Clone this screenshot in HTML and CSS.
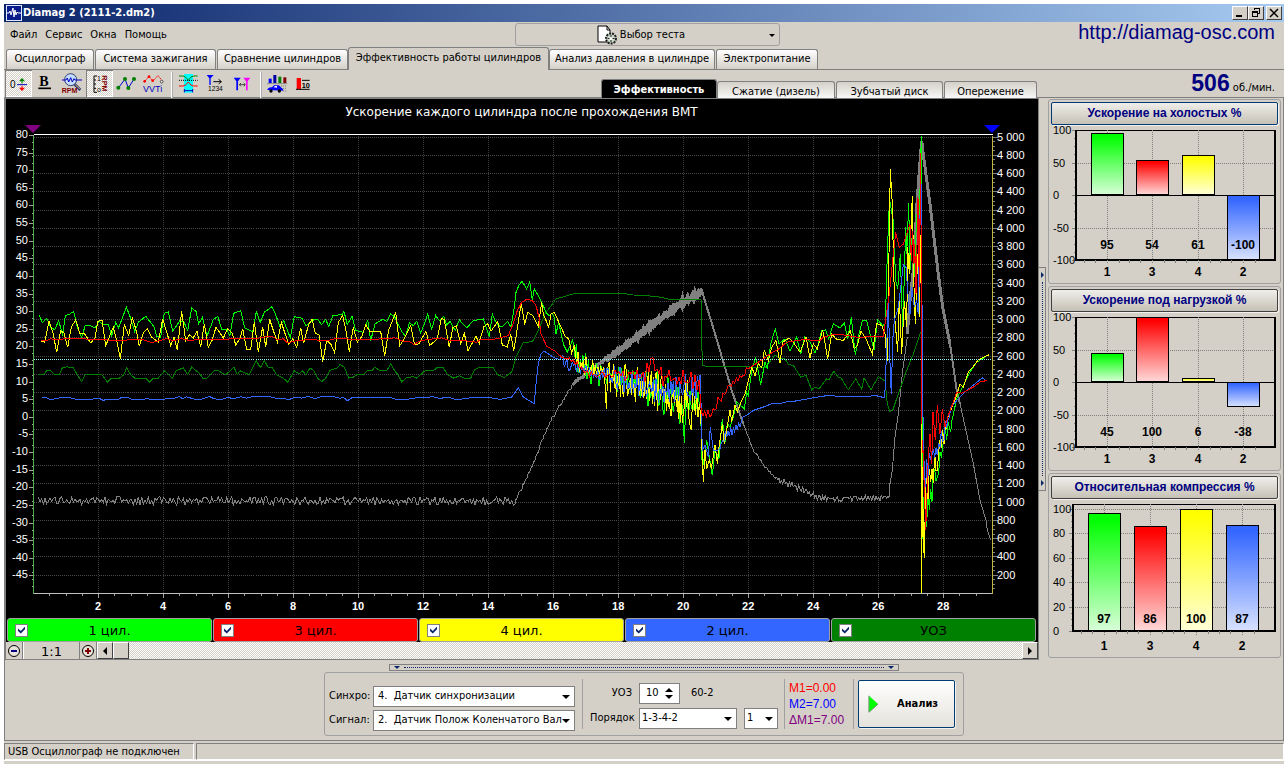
FILE: index.html
```html
<!DOCTYPE html>
<html lang="ru">
<head>
<meta charset="utf-8">
<title>Diamag 2 (2111-2.dm2)</title>
<link rel="stylesheet" href="styles.css">
</head>
<body>
<div class="app">
  <header class="titlebar">
    <svg class="app-icon" viewBox="0 0 16 16"><rect width="16" height="16" fill="#dfe8ff"/><rect x="1" y="1" width="14" height="14" fill="#0a1c8c"/><path d="M1 8h2l1-2 1 4 2-7 1 9 1-7 1 5 1-3 1 1h3" fill="none" stroke="#fff"/></svg>
    <h1>Diamag 2 (2111-2.dm2)</h1>
    <div class="win-buttons">
      <button aria-label="Свернуть"><svg viewBox="0 0 14 12"><path d="M3 8h6v2H3z"/></svg></button>
      <button aria-label="Восстановить"><svg viewBox="0 0 14 12"><path d="M5 1h6v1H5zM10 1h1v6h-1zM5 1h1v2H5zM9 6h2v1H9zM3 4h6v2H3zM3 4h1v6H3zM8 4h1v6H8zM3 9h6v1H3z"/></svg></button>
      <button class="close" aria-label="Закрыть"><svg viewBox="0 0 14 12"><path d="M3 2l8 8M11 2l-8 8" fill="none" stroke="#000" stroke-width="1.500"/></svg></button>
    </div>
  </header>

  <div class="menubar">
    <nav class="menu"><button>Файл</button><button>Сервис</button><button>Окна</button><button>Помощь</button></nav>
    <button class="test-select">
      <svg viewBox="0 0 20 20"><path d="M1 1h9l3 4v12H1z" fill="#fff" stroke="#000"/><path d="M10 1v4h3" fill="none" stroke="#000"/><circle cx="14" cy="13.500" r="5" fill="#b8c8b8" stroke="#222" stroke-width="2" stroke-dasharray="2 1"/><circle cx="14" cy="13.500" r="3.500" fill="#cfdccf"/><path d="M14 10v7M10.500 13.500h7" stroke="#222"/><circle cx="14" cy="13.500" r="1.500" fill="#fff"/></svg>
      <span>Выбор теста</span><i class="arrow"></i>
    </button>
    <a class="site" href="http://diamag-osc.com">http://diamag-osc.com</a>
  </div>

  <div class="tabs" role="tablist">
    <button class="tab t-osc" role="tab">Осциллограф</button>
    <button class="tab t-ign" role="tab">Система зажигания</button>
    <button class="tab t-cmp" role="tab">Сравнение цилиндров</button>
    <button class="tab t-eff active" role="tab" aria-selected="true">Эффективность работы цилиндров</button>
    <button class="tab t-prs" role="tab">Анализ давления в цилиндре</button>
    <button class="tab t-pow" role="tab">Электропитание</button>
  </div>

  <div class="toolbar">
    <div class="tools">
      <button class="tool pressed" aria-label="Ноль"><svg viewBox="0 0 81 81"><text x="15" y="54" font-size="30">0</text><path d="M36 44h30" stroke="#0000c0" stroke-width="3"/><path d="M51 28v13" stroke="#008000" stroke-width="3"/><path d="M42 34l9-10 9 10z" fill="#008000"/><path d="M51 47v10" stroke="red" stroke-width="3"/><path d="M42 53l9 10 9-10z" fill="red"/></svg></button>
      <button class="tool" aria-label="Жирная линия"><svg viewBox="0 0 81 81"><text class="serif" x="22" y="48" font-size="42">B</text><path d="M19 55h38" stroke="#000" stroke-width="5"/></svg></button>
      <button class="tool" aria-label="Обороты"><svg viewBox="0 0 81 81"><path d="M46 42l18 18" stroke="#203070" stroke-width="8"/><path d="M48 43l15 15" stroke="#e0c060" stroke-width="3"/><circle cx="35" cy="29" r="18" fill="#c4dcff" stroke="#304070" stroke-width="3"/><path d="M9 30h12l4-6 4 12 6-13 5 13 5-10 3 4h21" fill="none" stroke="#0000c0" stroke-width="3"/><text class="maroon" x="8" y="69" font-size="21">RPM</text></svg></button>
      <button class="tool pressed" aria-label="Шкала"><svg viewBox="0 0 81 81"><path d="M33 18H24V67h9M24 30h6M24 42h6M24 55h6" fill="none" stroke="#000" stroke-width="3"/><text x="33" y="32" font-size="21">1</text><text x="33" y="67" font-size="21">o</text><text class="maroon" font-size="22" transform="translate(47 16) rotate(90)">RPM</text></svg></button>
      <button class="tool" aria-label="Точки"><svg viewBox="0 0 81 81"><path d="M17 53L36 27l10 27L63 27" fill="none" stroke="#0000d0" stroke-width="3"/><g fill="#008000"><circle cx="16" cy="53" r="6"/><circle cx="36" cy="27" r="6"/><circle cx="46" cy="54" r="6"/><circle cx="63" cy="27" r="6"/></g></svg></button>
      <button class="tool" aria-label="VVTi"><svg viewBox="0 0 81 81"><path d="M14 34L27 19l11 14L54 17l12 14" fill="none" stroke="red" stroke-width="3" stroke-dasharray="5 2"/><g fill="red"><circle cx="14" cy="34" r="4"/><circle cx="27" cy="20" r="4"/><circle cx="38" cy="32" r="4"/></g><circle cx="65" cy="35" r="4" fill="#fff" stroke="#000" stroke-width="2"/><text class="navy" x="9" y="66" font-size="27">VVTi</text></svg></button>
      <span class="tool-sep"></span>
      <button class="tool" aria-label="Сравнение"><svg viewBox="0 0 81 81"><path d="M27 12h27v56H27z" fill="#00ffff"/><path d="M12 18h12q8 0 16 13q8-13 16-13h12" fill="none" stroke="#008000" stroke-width="3"/><path d="M12 31h56" stroke="#000" stroke-width="3" stroke-dasharray="3 3"/><path d="M12 48h12q8 0 16-12q8 12 16 12h12" fill="none" stroke="red" stroke-width="3"/><path d="M28 62h25M28 57v10M53 57v10" stroke="#0000c0" stroke-width="3"/></svg></button>
      <button class="tool" aria-label="Нумерация"><svg viewBox="0 0 81 81"><path d="M14 15h21l-9 10v20h-4V25z" fill="#0000ff"/><path d="M34 35h24M50 28l8 7-8 7" fill="none" stroke="#000" stroke-width="3"/><text x="18" y="62" font-size="20">1234</text></svg></button>
      <button class="tool" aria-label="Маркеры"><svg viewBox="0 0 81 81"><path d="M14 23h21l-8 11v27h-5V34z" fill="#0000ff"/><path d="M43 23h21l-8 11v27h-5V34z" fill="#ff00ff"/><path d="M32 44h16M36 39l-5 5 5 5M44 39l5 5-5 5" fill="none" stroke="#000" stroke-width="2"/></svg></button>
      <span class="tool-sep"></span>
      <button class="tool" aria-label="Автомобиль"><svg viewBox="0 0 81 81"><path d="M14 26h9v13h-9z" fill="#0000ff"/><path d="M28 15h9v24h-9z" fill="#0000a0"/><path d="M43 20h9v19h-9z" fill="#008000"/><path d="M58 22h9v17h-9z" fill="#800000"/><path d="M9 41h61" stroke="#888" stroke-width="3"/><path d="M10 60q2-9 14-8l6-6h15l8 8q6 2 5 8z" fill="#0000ff"/><path d="M29 52l4-4h6v5z" fill="#fff"/><circle cx="21" cy="63" r="5"/><circle cx="46" cy="63" r="5"/><path d="M51 48h18M57 55h12M58 63h10" stroke="#777" stroke-width="3" stroke-dasharray="3 3"/></svg></button>
      <button class="tool" aria-label="Уровень"><svg viewBox="0 0 81 81"><path d="M17 24h13v33H17z" fill="#f00"/><path d="M33 31h23M15 58h41" stroke="#000" stroke-width="3"/><text class="boldtxt" x="32" y="54" font-size="22">10</text></svg></button>
    </div>
    <div class="subtabs" role="tablist">
      <button class="subtab s-eff active" role="tab" aria-selected="true">Эффективность</button>
      <button class="subtab s-cmp" role="tab">Сжатие (дизель)</button>
      <button class="subtab s-gear" role="tab">Зубчатый диск</button>
      <button class="subtab s-adv" role="tab">Опережение</button>
    </div>
    <p class="rpm"><b>506</b> об./мин.</p>
  </div>

  <main class="work">
    <section class="scope">
      <svg id="scope" class="scope-plot" role="img" aria-label="Ускорение каждого цилиндра"></svg>
      <div class="legend">
        <label class="ch c1"><input type="checkbox" checked><span>1 цил.</span></label>
        <label class="ch c3"><input type="checkbox" checked><span>3 цил.</span></label>
        <label class="ch c4"><input type="checkbox" checked><span>4 цил.</span></label>
        <label class="ch c2"><input type="checkbox" checked><span>2 цил.</span></label>
        <label class="ch c5"><input type="checkbox" checked><span>УОЗ</span></label>
      </div>
      <div class="scrollrow">
        <button class="zoom-btn" aria-label="Уменьшить"><svg viewBox="0 0 16 16"><circle cx="8" cy="8" r="5.500" fill="#e8e4dc" stroke="#000"/><path d="M5 8h6" stroke="#000080" stroke-width="2"/></svg></button>
        <span class="ratio">1:1</span>
        <button class="zoom-btn" aria-label="Увеличить"><svg viewBox="0 0 16 16"><circle cx="8" cy="8" r="5.500" fill="#e8e4dc" stroke="#000"/><path d="M5 8h6M8 5v6" stroke="#800000" stroke-width="2"/></svg></button>
        <button class="raised" aria-label="Влево"><i class="left"></i></button>
        <button class="raised" aria-label="Ползунок"></button>
        <span class="track"></span>
        <button class="raised" aria-label="Вправо"><i class="right"></i></button>
      </div>
    </section>

    <div class="vsplit"><div class="vgrip"><i class="right"></i><span></span><i class="right"></i></div></div>

    <aside class="side">
      <section class="card"><button class="card-title focus">Ускорение на холостых %</button><svg class="bars" data-min="-100" data-step="50" data-max="100" data-left="26" data-values="95,54,61,-100"></svg></section>
      <section class="card"><button class="card-title">Ускорение под нагрузкой %</button><svg class="bars" data-min="-100" data-step="50" data-max="100" data-left="26" data-values="45,100,6,-38"></svg></section>
      <section class="card"><button class="card-title">Относительная компрессия %</button><svg class="bars" data-min="0" data-step="20" data-max="104" data-left="23" data-values="97,86,100,87"></svg></section>
    </aside>
  </main>

  <section class="bottom">
    <div class="hgrip"><i class="down"></i><span></span><i class="down"></i></div>
    <form class="controls">
      <div class="sensors">
        <label for="sync">Синхро:</label><div class="sel"><select id="sync"><option>4.&nbsp; Датчик синхронизации</option></select><i class="down"></i></div>
        <label for="signal">Сигнал:</label><div class="sel"><select id="signal"><option>2.&nbsp; Датчик Полож Коленчатого Вал</option></select><i class="down"></i></div>
      </div>
      <div class="order">
        <label for="uoz">УОЗ</label>
        <div class="row"><div class="spin"><input id="uoz" type="text" inputmode="numeric" value="10"><div><button type="button" aria-label="Больше"><i class="up"></i></button><button type="button" aria-label="Меньше"><i class="down"></i></button></div></div><span>60-2</span></div>
        <label for="firing">Порядок</label>
        <div class="row"><div class="sel firing"><select id="firing"><option>1-3-4-2</option></select><i class="down"></i></div><div class="sel first"><select aria-label="Первый цилиндр"><option>1</option></select><i class="down"></i></div></div>
      </div>
      <div class="markers"><span class="m1">M1=0.00</span><span class="m2">M2=7.00</span><span class="dm">ΔM1=7.00</span></div>
      <div class="go"><button type="button" class="analyze"><svg viewBox="0 0 12 20"><path d="M1 1l10 9-10 9z" fill="#00ff00"/><path d="M1 1v18l10-9" fill="none" stroke="#6c8c6c"/></svg><span>Анализ</span></button></div>
    </form>
  </section>

  <footer class="status"><span>USB Осциллограф не подключен</span><span></span></footer>
</div>
<script src="charts.js"></script>
</body>
</html>
```
FILE: styles.css
```css
* { box-sizing: border-box; }
body { margin: 0; background: #fff; font: 11px/14px "DejaVu Sans Condensed", "Noto Sans", sans-serif; color: #000; }
button, input, select { font: inherit; color: inherit; padding: 0; margin: 0; border: 0; background: none; border-radius: 0; }
h1, p { margin: 0; }
.app { display: flex; flex-direction: column; height: 100vh; min-height: 700px; padding: 4px 4px 0 4px; background: linear-gradient(#d4d0c8, #d4d0c8) content-box; }

.titlebar { display: flex; align-items: center; height: 18px; flex: none; padding: 0 2px; background: linear-gradient(90deg, #0a246a, #a6caf0); color: #fff; }
.app-icon { width: 16px; height: 16px; margin-right: 1px; }
.titlebar h1 { font: bold 11px/18px "DejaVu Sans Condensed", sans-serif; flex: 1; }
.win-buttons { display: flex; }
.win-buttons button { width: 16px; height: 14px; background: #d4d0c8; border: 1px solid; border-color: #fff #404040 #404040 #fff; }
.win-buttons svg { display: block; width: 14px; height: 12px; }
.win-buttons .close { margin-left: 2px; }

.menubar { display: grid; grid-template-columns: 1fr 265px 1fr; height: 26px; flex: none; align-items: start; padding: 1px 0 0 6px; }
.menu { display: flex; gap: 8px; padding: 5px 0; }
.test-select { display: flex; align-items: center; justify-content: center; gap: 3px; height: 23px; padding-right: 12px; border: 1px solid #a0a0a0; border-radius: 3px; position: relative; }
.test-select svg { width: 20px; height: 20px; }
.arrow { position: absolute; right: 4px; top: 10px; border: 3px solid transparent; border-top-color: #000; border-bottom: 0; }
.site { justify-self: end; padding-right: 9px; margin-top: -3px; font: 20px/24px "Liberation Sans", sans-serif; color: #000080; text-decoration: none; }

.tabs { display: flex; align-items: flex-end; height: 22px; flex: none; padding-left: 2px; border-bottom: 1px solid #808080; gap: 1px; }
.tab { height: 20px; padding-bottom: 1px; border: 1px solid #808080; border-bottom: 0; border-radius: 3px 3px 0 0; background: linear-gradient(#fff, #d4d0c8); white-space: nowrap; }
.tab.active { height: 23px; margin: 0 -1px -1px; background: #d4d0c8; }
.t-osc { width: 88px; } .t-ign { width: 121px; } .t-cmp { width: 131px; } .t-eff { width: 201px; padding-bottom: 3px; } .t-prs { width: 166px; } .t-pow { width: 102px; }

.toolbar { display: grid; grid-template-columns: 597px auto 1fr; height: 28px; flex: none; border-bottom: 1px solid #808080; }
.tools { display: flex; padding-left: 1px; }
.tool { width: 27px; height: 27px; }
.tool svg { display: block; width: 27px; height: 27px; font-family: "Liberation Sans", sans-serif; }
.tool.pressed { background: repeating-conic-gradient(#fff 0 25%, #d4d0c8 0 50%) 0 0 / 2px 2px; box-shadow: inset 1px 1px #808080, inset -1px -1px #fff; }
.tool-sep { width: 4px; border-left: 2px ridge #fff; margin: 2px 0 2px 4px; }
.serif { font-family: "Liberation Serif", serif; font-weight: bold; }
.maroon { fill: #800000; font-weight: bold; } .navy { fill: #0000c0; } .boldtxt { font-weight: bold; }
.subtabs { display: flex; align-items: flex-end; gap: 1px; }
.subtab { height: 20px; border: 1px solid #808080; border-bottom: 0; border-radius: 3px 3px 0 0; background: linear-gradient(#d4d0c8, #fff); }
.subtab.active { height: 22px; padding-bottom: 2px; background: #000; color: #fff; font-weight: bold; margin-right: -1px; }
.s-eff { width: 116px; } .s-cmp { width: 118px; } .s-gear { width: 107px; } .s-adv { width: 93px; }
.rpm { text-align: right; padding-right: 9px; line-height: 27px; white-space: nowrap; }
.rpm b { font: bold 23px/27px "Liberation Sans", sans-serif; color: #000080; }

.work { display: grid; grid-template-columns: minmax(0, 1fr) 9px 235px; flex: 1; min-height: 0; border-right: 1px solid #808080; border-left: 1px solid #808080; }
.scope { display: flex; flex-direction: column; min-width: 0; background: #000; border: 1px solid #808080; }
.scope-plot { display: block; width: 100%; flex: 1; min-height: 0; font-family: "Liberation Sans", sans-serif; font-size: 12px; }
.legend { display: grid; grid-template-columns: repeat(5, 1fr); gap: 1px; height: 24px; padding: 0 2px 2px 1px; font: 13px/20px "DejaVu Sans", sans-serif; }
.ch { display: flex; align-items: center; border: 1px solid #a0a0a0; border-radius: 3px; padding-left: 7px; }
.ch span { flex: 1; text-align: center; padding: 2px 20px 0 0; }
.ch input { appearance: none; width: 13px; height: 13px; background: #fff; border: 1px solid #808080; display: grid; place-items: center; }
.ch input:checked::after { content: ""; width: 7px; height: 7px; background: #0a246a; clip-path: polygon(0 30%, 40% 65%, 100% 0, 100% 40%, 40% 100%, 0 65%); }
.c1 { background: #0f0; } .c3 { background: #f00; } .c4 { background: #ff0; } .c2 { background: #36f; } .c5 { background: #008000; }
.scrollrow { display: flex; height: 17px; background: #d4d0c8; }
.zoom-btn { width: 17px; border-right: 1px solid #808080; display: grid; place-items: center; }
.zoom-btn svg { width: 16px; height: 16px; }
.ratio { width: 57px; text-align: center; border-left: 1px solid #fff; border-right: 1px solid #808080; font: 13px/20px "DejaVu Sans", sans-serif; }
.raised { width: 16px; display: grid; place-items: center; background: #d4d0c8; border: 1px solid; border-color: #fff #404040 #404040 #fff; }
.track { flex: 1; background: repeating-conic-gradient(#fff 0 25%, #d4d0c8 0 50%) 0 0 / 2px 2px; }
i.left, i.right, i.up, i.down { display: block; width: 0; height: 0; border: 4px solid transparent; }
i.left { border-right-color: #000; border-left: 0; }
i.right { border-left-color: #000; border-right: 0; }
i.down { border-top-color: #000; border-bottom: 0; }
i.up { border-bottom-color: #000; border-top: 0; }
.vsplit { display: grid; align-items: center; }
.vgrip { display: flex; flex-direction: column; align-items: center; width: 7px; height: 224px; padding: 4px 0; border: 1px solid #808080; border-left: 0; }
.vgrip span { flex: 1; margin: 4px 0; border-left: 1px dotted #0a246a; }
.vgrip i.right { border-width: 3px 0 3px 3px; border-left-color: #0a246a; }

.side { display: flex; flex-direction: column; gap: 2px; padding: 1px 2px 2px 0; }
.card { flex: 1; min-height: 0; display: flex; flex-direction: column; border: 1px solid #a0a0a0; border-radius: 3px; padding: 2px 1px 0; }
.card-title { height: 23px; flex: none; margin: 0 1px; padding-bottom: 2px; border: 1px solid #404040; border-radius: 2px; background: linear-gradient(#efeeea, #c6c1b6); box-shadow: 1px 1px #f4f2ee; color: #000080; font: bold 12px/18px "Liberation Sans", sans-serif; }
.card-title.focus { border-color: #003c74; }
.bars { display: block; width: 100%; flex: 1; min-height: 0; font-family: "Liberation Sans", sans-serif; font-size: 12px; }

.bottom { flex: none; display: flex; flex-direction: column; align-items: center; height: 81px; padding-top: 4px; border: 1px solid #808080; border-top: 0; gap: 1px; }
.hgrip { display: flex; align-items: center; width: 510px; height: 7px; padding: 0 4px; border: 1px solid #808080; }
.hgrip span { flex: 1; margin: 0 4px; border-top: 1px dotted #0a246a; }
.hgrip i.down { border-width: 3px 3px 0; border-top-color: #0a246a; }
.controls { display: flex; align-items: stretch; width: 640px; height: 64px; padding: 6px 8px 6px 4px; border: 1px solid #a0a0a0; border-radius: 3px; }
.sensors { display: grid; grid-template-columns: 44px 202px; row-gap: 3px; align-content: center; align-items: center; padding: 8px 7px 0 0; border-right: 1px solid #a0a0a0; margin-right: 7px; }
.sel { position: relative; display: flex; height: 21px; background: #fff; border: 1px solid #808080; }
.sel select { appearance: none; flex: 1; min-width: 0; padding: 0 4px; white-space: nowrap; }
.sel i.down { position: absolute; right: 4px; top: 8px; }
.order { display: grid; grid-template-columns: 42px auto; column-gap: 7px; row-gap: 4px; align-content: center; align-items: center; padding: 3px 6px 0 0; border-right: 1px solid #a0a0a0; }
.order label { text-align: right; }
.row { display: flex; align-items: center; gap: 7px; }
.spin { display: flex; width: 41px; height: 21px; background: #fff; border: 1px solid #808080; margin-right: 4px; }
.spin input { width: 25px; padding-left: 6px; }
.spin div { display: flex; flex-direction: column; justify-content: center; gap: 3px; }
.spin button { display: block; }
.firing { width: 98px; } .first { width: 34px; } .firing select, .first select { padding-left: 2px; }
.markers { display: flex; flex-direction: column; justify-content: center; gap: 2px; width: 69px; padding-left: 4px; border-right: 1px solid #a0a0a0; font: 12px/14px "Liberation Sans", sans-serif; margin-right: 4px; }
.m1 { color: #f00; } .m2 { color: #00f; } .dm { color: #800080; }
.go { display: grid; flex: 1; align-items: center; }
.analyze { display: flex; align-items: center; gap: 18px; height: 48px; padding: 0 9px; border: 1px solid #003c74; border-radius: 2px; background: linear-gradient(#fff, #e4e2dc); font-weight: bold; box-shadow: 1px 1px #f4f2ee; }
.analyze svg { width: 11px; height: 20px; }

.status { flex: none; display: flex; gap: 2px; height: 23px; padding: 2px 0 4px; background: linear-gradient(#fff, #fff) 0 18px / 100% 2px no-repeat; }
.status span { border: 1px solid; border-color: #808080 #fff #fff #808080; padding-left: 3px; line-height: 15px; }
.status span:first-child { width: 190px; }
.status span:last-child { flex: 1; }
```
FILE: charts.js
```js
const NS = 'http://www.w3.org/2000/svg';
function add(parent, name, attrs, text) {
  const el = document.createElementNS(NS, name);
  for (const k in attrs) el.setAttribute(k, attrs[k]);
  if (text !== undefined) el.textContent = text;
  parent.appendChild(el);
  return el;
}

let seed = 7;
function rnd() { seed = (seed * 16807) % 2147483647; return seed / 2147483647; }

// Samples are kept on a 2877 x 1377 grid that covers the whole plot.
const GRID_W = 2877, GRID_H = 1377;
const A = [-99, 348], B = [1341, 348], C = [2181, -42], D = [2181, 618];
function block(origin, text) {
  return text.trim().split(/\s+/).map(p => p.split(',').map(Number)).map(p => [p[0] + origin[0], p[1] + origin[1]]);
}
function noisy(origin, text, amp, step, amp2) {
  const pts = block(origin, text), out = [];
  const x0 = pts[0][0], x1 = pts[pts.length - 1][0];
  let i = 0, sign = 1;
  for (let x = x0; x <= x1; x += step) {
    while (i < pts.length - 2 && x > pts[i + 1][0]) i++;
    const [ax, ay] = pts[i], [bx, by] = pts[i + 1];
    const a = amp + ((amp2 || amp) - amp) * (x - x0) / (x1 - x0);
    sign = rnd() < 0.8 ? -sign : sign;
    out.push([x, ay + (by - ay) * (x - ax) / (bx - ax) + sign * a * rnd()]);
  }
  return out;
}

const traces = [
  ['#808080', 1, () => [...noisy(A, '115,752 1545,752', 13, 5), ...noisy(B, '105,752 125,715 160,640 190,560 215,505 245,455 280,400 315,372', 6, 4)]],
  ['#808080', 3, () => noisy(B, '280,400 315,372 370,330 440,285', 4, 4)],
  ['#808080', 5, () => noisy(B, '380,325 430,290 500,235 560,190 620,148 665,124', 4, 3, 8)],
  ['#808080', 2, () => block(B, '665,115 676,155 690,200 720,300 755,420 790,520')],
  ['#808080', 1, () => [...noisy(B, '790,520 820,600 855,650 880,678 900,687', 4, 4), ...noisy(D, '60,420 100,437 130,450 160,465 180,475 280,475 388,472', 10, 4)]],
  ['#808080', 1, () => block(D, '388,470 390,430 397,390 405,290 415,220 428,90 442,-10')],
  ['#808080', 3, () => block(C, '442,640 450,540 463,420 470,260 478,150 485,60 491,110 510,250 535,460 548,560 570,670')],
  ['#808080', 2, () => block(D, '570,10 590,150 600,190')],
  ['#808080', 1, () => block(D, '600,190 640,370 660,480 678,540 682,570 692,600')],
  ['#008000', 1, () => [
    ...block(A, '115,373 131,373 140,360 152,361 165,373 178,373 187,352 200,349 220,352 235,378 245,394 256,373 306,373 322,395 334,383 358,383 371,373 380,352 392,373 404,383 437,383 448,395 460,383 475,383 494,361 517,383 529,361 550,352 563,373 575,350 600,370 608,383 620,383 643,361 655,361 677,373 702,350 712,373 720,361 748,373 769,330 781,352 793,330 805,352 817,352 830,373 850,383 863,395 883,361 897,370 907,361 918,373 930,352 942,361 953,383 965,394 977,383 990,360 1012,352 1021,341 1034,352 1046,383 1060,380 1070,373 1090,373 1101,361 1115,361 1125,350 1140,361 1160,361 1172,340 1184,361 1194,373 1205,394 1218,383 1240,378 1250,383 1275,361 1300,361 1310,352 1330,352 1343,373 1360,383 1380,376 1392,383 1412,383 1424,358 1440,350'),
    ...block(B, '40,352 52,372 72,381 95,365 108,320 130,275 157,274 175,240 195,190 228,145 255,137 285,128 310,130 400,128 440,130 460,133 500,135 545,140 575,148 640,145 663,148 667,345 685,349 710,347 740,349 800,349 855,352 868,335 885,315 895,318'),
    ...block(D, '60,52 75,55 85,72 100,75 122,110 138,105 155,148 165,140 177,145 200,115 207,118 221,92 235,110 243,112 265,148 287,115 305,146 312,112 333,148 355,108 375,122 382,190 390,213 398,210 415,160 440,90 460,40 482,-25')]],
  ['#00ff00', 1, () => [
    ...block(A, '118,193 127,217 140,203 152,230 164,238 176,210 188,255 196,195 210,190 221,182 232,230 245,260 256,224 270,224 285,232 298,212 310,223 325,223 335,255 347,215 356,232 379,170 391,200 404,243 415,215 437,197 450,213 462,228 470,257 482,260 493,188 505,184 518,242 540,210 552,215 563,240 575,172 588,182 596,220 607,200 621,257 640,207 653,197 665,236 680,238 690,255 701,188 722,180 734,232 758,244 769,183 781,215 793,185 816,168 826,190 840,228 851,210 871,262 883,198 907,203 918,225 941,208 953,207 965,222 977,206 986,228 999,195 1026,192 1032,183 1042,222 1056,197 1067,240 1090,245 1103,208 1112,270 1125,220 1148,206 1160,213 1172,190 1185,200 1205,243 1217,258 1228,217 1240,225 1250,212 1262,248 1275,215 1283,190 1295,236 1307,195 1318,210 1331,197 1340,223 1350,213 1366,240 1378,208 1400,232 1420,210 1450,205 1468,258 1477,190 1486,212 1500,228'),
    ...block(B, '67,229 83,213 93,230 98,200 104,160 107,128 116,105 126,92 140,115 149,95 157,148 163,115 175,135 188,162 200,188 207,195 216,188 222,198 228,250 236,215 245,258 252,285 262,305 278,268'),
    ...noisy(B, '285,310 300,335 350,372 440,390 500,410', 42, 4),
    ...noisy(B, '500,410 560,430 606,465', 65, 4), ...block(B, '610,500 613,578 618,450'),
    ...noisy(B, '622,460 664,470', 45, 4),
    ...block(B, '667,660 680,570 688,620 697,675 705,600 717,625 727,505 735,575 742,520 750,530 760,500 770,455 793,475 800,425 805,435 815,360 827,320 842,402 855,335 862,355 872,280 886,235 893,265'),
    ...block(C, '57,670 75,655 90,692 110,650 122,700 134,648 150,665 165,697 175,670 185,630 197,628 206,655 220,610 240,622 253,607 263,655 274,590 286,703 297,640 307,600 320,600 330,640 342,688 353,597 368,615 376,610 382,400 387,270 390,243 400,300 407,480 413,505 421,400 428,630 437,320 440,400 446,247 450,450 458,320 463,470 470,280 477,330 484,45 487,1150'),
    ...block(D, '487,595 491,480 495,440 500,560'),
    ...noisy(D, '504,470 512,460 525,400 540,350 560,280 578,230', 50, 4, 25),
    ...block(D, '590,175 600,155 612,130 630,95 650,65 675,50')]],
  ['#ffff00', 1, () => [
    ...block(A, '122,273 134,275 147,212 158,243 170,305 182,240 192,248 203,290 214,230 227,208 240,250 252,248 272,277 285,262 293,213 306,208 317,285 328,260 340,230 350,270 361,325 373,222 386,255 397,200 410,245 418,287 430,247 442,235 455,260 475,275 488,205 500,245 512,285 522,260 532,297 545,182 557,270 568,253 580,262 591,242 602,290 613,220 625,290 636,270 648,230 670,262 683,235 697,248 707,283 720,265 728,235 740,298 752,298 763,213 775,305 788,228 797,290 809,207 832,275 844,215 866,282 878,265 890,290 902,232 911,278 925,225 936,205 946,248 957,253 968,333 980,270 992,280 1004,307 1015,215 1028,195 1038,240 1048,305 1060,230 1072,275 1085,258 1097,223 1110,243 1142,243 1154,317 1166,238 1187,187 1199,285 1210,270 1232,225 1244,283 1256,280 1278,243 1289,285 1312,265 1324,203 1333,208 1348,290 1358,232 1369,225 1382,280 1393,248 1404,300 1428,258 1438,278'),
    ...block(B, '0,265 12,228 23,220 33,242 53,213 67,283 82,290 92,250 101,300 108,258 118,195 124,160 134,222 143,185 158,195 175,227 185,155 190,190 206,230 213,190 223,185 238,218 256,258 266,265 275,308 283,285'),
    ...noisy(B, '290,325 320,350 374,355', 38, 4), ...block(B, '379,475 384,350'),
    ...noisy(B, '388,385 440,400 510,410 560,435 630,460', 55, 3, 70), ...block(B, '634,540 638,430'),
    ...noisy(B, '642,450 662,485', 45, 4),
    ...block(B, '664,545 670,695 675,600 680,655 688,630 694,655 705,585 712,640 717,590 727,520 733,580 745,510 750,480 755,515 765,465 772,485 785,450 795,430 805,390 815,350 825,375 835,340 845,352 853,300 865,330 875,290 888,270'),
    ...block(C, '60,728 68,665 87,652 100,665 120,695 138,650 150,712 160,670 172,685 188,628 203,715 215,640 228,655 250,660 271,632 283,685 292,675 303,632 318,655 337,700 350,608 365,615 375,640 381,725 387,400 391,145 397,250 400,400 405,600 413,695 418,530 425,700 433,540 440,620 443,380 448,460 457,225 462,500 466,610 473,400 478,590 484,300 484,1419'),
    ...block(D, '484,250 486,590 488,400 490,600 493,655 497,440'),
    ...noisy(D, '500,450 510,420 530,360 550,290 575,215', 55, 4, 20),
    ...block(D, '590,165 600,130 610,140 625,95 640,78 655,58 686,43')]],
  ['#3366ff', 1, () => [
    ...block(A, '126,442 140,442 150,448 180,442 208,440 216,445 240,447 300,445 310,450 322,446 355,448 365,440 375,443 385,441 397,448 430,447 445,444 450,447 520,445 538,438 548,445 560,439 575,444 592,448 610,445 628,438 640,444 660,448 685,441 700,445 722,439 740,443 760,438 810,439 825,443 850,444 866,448 885,440 905,443 925,438 945,445 965,438 1010,440 1020,444 1030,440 1042,451 1055,442 1080,441 1170,441 1190,447 1215,448 1240,443 1300,439 1320,444 1345,440 1370,448 1410,442'),
    ...block(B, '0,440 40,443 60,447 95,440 115,412 130,440 163,460 168,400 175,340 183,310 193,302 220,320 240,328'),
    ...noisy(B, '245,330 290,355 400,378', 18, 4, 22), ...noisy(B, '404,380 450,400 560,420 662,405', 42, 4, 48),
    ...block(B, '664,480 667,600 675,585 685,620 691,530 700,600 712,600 720,595'),
    ...noisy(B, '724,580 730,560 755,540 780,515', 16, 4),
    ...block(B, '788,500 800,495 820,480 850,470 880,458'),
    ...block(D, '60,190 75,185 100,183 160,172 205,165 240,168 300,168 350,166 374,172 380,20 385,-115 391,100 394,160 398,0'),
    ...block(C, '403,600 415,560 422,500 430,430 438,440 444,520 450,580 455,500 463,560 470,540 475,580 478,350 483,185 487,660'),
    ...block(D, '487,60 488,190 493,400 497,440'),
    ...noisy(D, '500,390 512,360 530,325 547,290 575,210', 45, 4, 18),
    ...block(D, '595,175 620,150 645,130 667,112 678,120')]],
  ['#ff0000', 1, () => [
    ...block(A, '122,271 140,271 150,265 180,267 200,263 240,263 280,268 315,266 330,270 370,270 395,266 430,268 455,276 480,270 500,264 520,270 545,264 570,270 600,266 640,268 680,266 720,263 760,265 790,260 815,257 832,267 850,265 862,277 890,270 940,266 965,271 985,270 1010,263 1040,265 1080,268 1110,268 1150,264 1185,262 1210,272 1230,274 1242,282 1262,270 1290,266 1325,262 1350,270 1390,270 1430,275'),
    ...block(B, '0,268 50,265 85,255 100,218 112,180 125,155 140,146 157,150 168,165 177,200 183,250 200,287 225,302 245,320 262,326'),
    ...noisy(B, '268,328 290,340 325,372 400,374', 9, 6), ...noisy(B, '405,365 500,368 520,348 540,370 600,390 660,385', 30, 6, 38),
    ...noisy(B, '664,490 702,485 712,455 738,425 765,390 800,360', 14, 5, 10), ...block(B, '805,355 820,345 850,325 870,310'),
    ...block(C, '60,683 80,665 130,657 180,660 190,650 215,643 250,643 290,650 370,648 378,590 388,520 400,400 407,335 418,380 430,370 440,340 450,310 454,420 458,330 462,430 464,370 468,520 474,230 478,500 482,95 486,1000'),
    ...block(D, '488,300 497,570 505,350 510,280 515,370 519,215 526,300 532,195 540,280 547,205 555,260 565,225 578,190 590,155 605,158 640,140 660,125 680,120')]],
  ['#ffff00', 1, () => block(D, '484,250 484,759')],
  ['#ffff00', 2, () => block(D, '487,380 487,590')],
  ['#00ff00', 1, () => block(C, '485,45 485,190')]
];

function drawScope() {
  const svg = document.getElementById('scope');
  svg.replaceChildren();
  seed = 7;
  const w = svg.clientWidth, h = svg.clientHeight;
  const L = 27, T = 36, R = w - 46, Bt = h - 25, pw = R - L, ph = Bt - T;
  const g = add(svg, 'g', { 'shape-rendering': 'crispEdges', fill: 'none' });
  const line = (x1, y1, x2, y2, stroke, dash) => add(g, 'path', { d: `M${Math.round(x1) + .5} ${Math.round(y1) + .5}L${Math.round(x2) + .5} ${Math.round(y2) + .5}`, stroke, ...(dash ? { 'stroke-dasharray': dash } : {}) });
  add(svg, 'text', { x: (L + R) / 2 + 9, y: 17, fill: '#fff', 'text-anchor': 'middle', 'font-family': 'DejaVu Sans', 'font-size': 12 }, 'Ускорение каждого цилиндра после прохождения ВМТ');

  for (let v = 200; v <= 5000; v += 200) {
    const y = Bt - v / 5018 * ph;
    line(L, y, R, y, '#484848', '1 1');
    line(R, y, R + 5, y, '#808080');
    for (let k = 1; k < 4; k++) line(R, y + k * ph / 5018 * 50, R + 2, y + k * ph / 5018 * 50, '#808080');
    const label = v >= 1000 ? Math.floor(v / 1000) + ' ' + String(v % 1000).padStart(3, '0') : v;
    add(svg, 'text', { x: R + 5, y: Math.round(y) + 4, fill: '#fff', 'font-size': 11 }, label);
  }
  for (let v = -49; v <= 80; v++) {
    const y = T + (80 - v) / 130 * ph, major = v % 5 === 0;
    if (major || v % 2 === 0) line(L - (major ? 5 : 2), y, L, y, '#a0a0a0');
    if (major) add(svg, 'text', { x: L - 5, y: Math.round(y) + 3, fill: '#fff', 'text-anchor': 'end', 'font-size': 11 }, v);
  }
  for (let t = .5; t < 29.5; t += .5) {
    const x = L + t / 29.5 * pw, major = t % 2 === 0;
    line(x, Bt, x, Bt + (major ? 4 : 2), '#a0a0a0');
    if (major) {
      line(x, T, x, Bt, '#383838', '1 1');
      add(svg, 'text', { x: x, y: Bt + 17, fill: '#fff', 'text-anchor': 'middle', 'font-weight': 'bold', 'font-size': 11 }, t);
    }
  }
  for (const [stroke, width, make] of traces) {
    const pts = make().map(([x, y]) => (L + x / GRID_W * pw).toFixed(1) + ',' + (T + y / GRID_H * ph).toFixed(1)).join(' ');
    add(g, 'polyline', { points: pts, stroke, 'stroke-width': width });
  }
  const cy = T + ph * .49;
  line(L, cy, R, cy, '#9ff', '1 1');
  line(L, T - 1, R, T - 1, '#fff');
  line(L, Bt, R, Bt, '#c0c0c0');
  line(L, T, L, Bt, '#4caf50');
  line(R, T, R, Bt, '#c0b840');
  add(svg, 'path', { d: `M${L - 8} ${T - 10}h16l-8 8z`, fill: '#800080' });
  add(svg, 'path', { d: `M${R - 8} ${T - 10}h16l-8 8z`, fill: '#0000ff' });
}

const palette = [['#00ff00', '#d8ffd8'], ['#ff0000', '#ffd8d8'], ['#ffff00', '#ffffd8'], ['#3366ff', '#d8e2ff']];
function drawBars(svg, n) {
  svg.replaceChildren();
  const w = svg.clientWidth, h = svg.clientHeight, d = svg.dataset;
  const min = +d.min, max = +d.max, step = +d.step, L = +d.left;
  const T = 5, R = w - 4, Bt = min < 0 ? h - 23 : h - 26;
  const Y = v => Math.round(Bt - (v - min) / (max - min) * (Bt - T));
  const defs = add(svg, 'defs', {});
  const g = add(svg, 'g', { 'shape-rendering': 'crispEdges' });
  const X = i => Math.round(L + 31 + i * (R - L) * .228);
  for (let v = min; v <= max; v += step) {
    add(g, 'path', { d: `M${L} ${Y(v) + .5}H${R}`, stroke: '#808080', 'stroke-dasharray': '1 1' });
    add(g, 'path', { d: `M${L - 4} ${Y(v) + .5}H${L}`, stroke: '#808080' });
    for (let k = 1; k < 4 && v + step <= max; k++) add(g, 'path', { d: `M${L - 2} ${Y(v + k * step / 4) + .5}H${L}`, stroke: '#808080' });
    add(svg, 'text', { x: 3, y: Y(v) + 4, 'font-size': 11 }, v);
  }
  add(g, 'path', { d: `M${L} ${T + .5}H${R}`, stroke: '#000' });
  add(g, 'path', { d: `M${L} ${T}V${Bt}H${R}V${T}`, stroke: '#000', 'stroke-width': 2, fill: 'none' });
  add(g, 'path', { d: `M${L} ${Y(0) + .5}H${R}`, stroke: '#000' });
  d.values.split(',').map(Number).forEach((v, i) => {
    const x = X(i), id = `bar${n}${i}`;
    add(g, 'path', { d: `M${x + .5} ${T}V${Bt + 4}`, stroke: '#808080', 'stroke-dasharray': '1 1' });
    for (const k of [-23, -12, 12]) add(g, 'path', { d: `M${x + k + .5} ${Bt}v3`, stroke: '#808080' });
    const grad = add(defs, 'linearGradient', { id, x1: 0, y1: 0, x2: 0, y2: 1 });
    add(grad, 'stop', { offset: .05, 'stop-color': palette[i][0] });
    add(grad, 'stop', { offset: 1, 'stop-color': palette[i][1] });
    const y0 = Math.min(Y(v), Y(0)), y1 = Math.max(Y(v), Y(0));
    add(g, 'rect', { x: x - 15.5, y: y0 + .5, width: 32, height: y1 - y0 - 1, fill: `url(#${id})`, stroke: '#000' });
    add(svg, 'text', { x, y: Bt - (min < 0 ? 11 : 8), 'text-anchor': 'middle', 'font-weight': 'bold' }, v);
    add(svg, 'text', { x, y: Bt + (min < 0 ? 16 : 19), 'text-anchor': 'middle', 'font-weight': 'bold' }, [1, 3, 4, 2][i]);
  });
}

function draw() {
  drawScope();
  document.querySelectorAll('.bars').forEach(drawBars);
}
draw();
addEventListener('resize', draw);
```
